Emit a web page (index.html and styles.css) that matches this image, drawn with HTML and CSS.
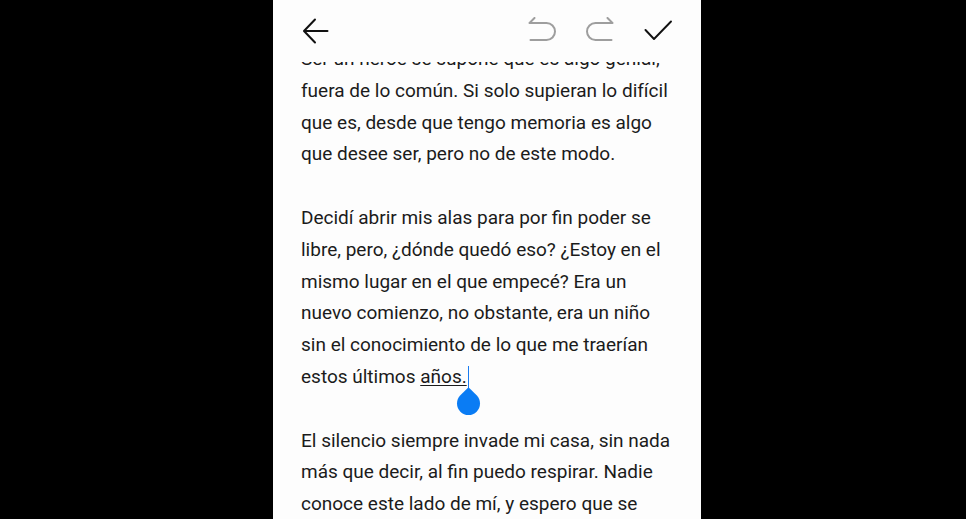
FILE: index.html
```html
<!DOCTYPE html>
<html lang="es">
<head>
<meta charset="utf-8">
<title>Editor</title>
<link rel="stylesheet" href="styles.css">
</head>
<body>
<main class="screen">
  <header class="toolbar">
    <button class="icon-btn" aria-label="Atrás">
      <svg viewBox="0 0 28 28" width="28" height="28"><path d="M2.5 14H25.5M13 2.5L2 14L13 25.5" fill="none" stroke="#111" stroke-width="2" stroke-linecap="round" stroke-linejoin="round"/></svg>
    </button>
    <div class="actions">
      <button class="icon-btn" aria-label="Deshacer">
        <svg viewBox="0 0 28 28" width="28" height="28"><path d="M1.5 6H18.5A8.5 8.5 0 0 1 18.5 23H2.5M1.5 6L6.5 1" fill="none" stroke="#9e9e9e" stroke-width="2" stroke-linecap="round" stroke-linejoin="round"/></svg>
      </button>
      <button class="icon-btn" aria-label="Rehacer">
        <svg viewBox="0 0 28 28" width="28" height="28"><path d="M26.5 6H9.5A8.5 8.5 0 0 0 9.5 23H25.5M26.5 6L21.5 1" fill="none" stroke="#9e9e9e" stroke-width="2" stroke-linecap="round" stroke-linejoin="round"/></svg>
      </button>
      <button class="icon-btn" aria-label="Guardar">
        <svg viewBox="0 0 28 28" width="28" height="28"><path d="M1.5 13L10 22L27 4.5" fill="none" stroke="#111" stroke-width="1.9" stroke-linecap="round" stroke-linejoin="round"/></svg>
      </button>
    </div>
  </header>
  <article class="text">
    <p>Ser un héroe se supone que es algo genial,<br>fuera de lo común. Si solo supieran lo difícil<br>que es, desde que tengo memoria es algo<br>que desee ser, pero no de este modo.</p>
    <p>Decidí abrir mis alas para por fin poder se<br>libre, pero, ¿dónde quedó eso? ¿Estoy en el<br>mismo lugar en el que empecé? Era un<br>nuevo comienzo, no obstante, era un niño<br>sin el conocimiento de lo que me traerían<br>estos últimos <span class="composing">años.</span><span class="caret"></span></p>
    <p>El silencio siempre invade mi casa, sin nada<br>más que decir, al fin puedo respirar. Nadie<br>conoce este lado de mí, y espero que se</p>
  </article>
</main>
</body>
</html>
```
FILE: styles.css
```css
html, body {
  margin: 0;
  padding: 0;
  height: 100%;
  background: #000;
}
body {
  display: flex;
  justify-content: center;
  padding-left: 8px;
  box-sizing: border-box;
  overflow: hidden;
}
.screen {
  position: relative;
  flex: 0 0 428px;
  width: 428px;
  height: 519px;
  background: #fdfdfd;
  overflow: hidden;
}
.toolbar {
  position: absolute;
  top: 0;
  left: 0;
  right: 0;
  height: 62px;
  background: #fdfdfd;
  display: flex;
  align-items: center;
  justify-content: space-between;
  padding: 0 29px 0 29px;
  box-sizing: border-box;
  z-index: 2;
}
.actions {
  display: flex;
  align-items: center;
  gap: 30px;
}
.icon-btn {
  width: 28px;
  height: 28px;
  padding: 0;
  margin: 0;
  border: 0;
  background: none;
  display: block;
}
.icon-btn svg {
  display: block;
}
.text {
  padding: 43px 0 0 28px;
  font-family: Roboto, "Noto Sans", sans-serif;
  font-size: 19px;
  line-height: 31.8px;
  color: #1b1b1b;
  white-space: nowrap;
}
.text p {
  margin: 0 0 31.8px 0;
}
.composing {
  text-decoration: underline;
  text-decoration-thickness: 1px;
  text-underline-offset: 2px;
}
.caret {
  position: relative;
  display: inline-block;
  width: 1.5px;
  height: 22px;
  margin-left: 1px;
  vertical-align: -5px;
  background: #1a7cf0;
}
.caret::after {
  content: "";
  position: absolute;
  left: -10.5px;
  top: 26px;
  width: 23px;
  height: 23px;
  background: #0a7cf4;
  border-radius: 0 50% 50% 50%;
  transform: rotate(45deg);
}
```
